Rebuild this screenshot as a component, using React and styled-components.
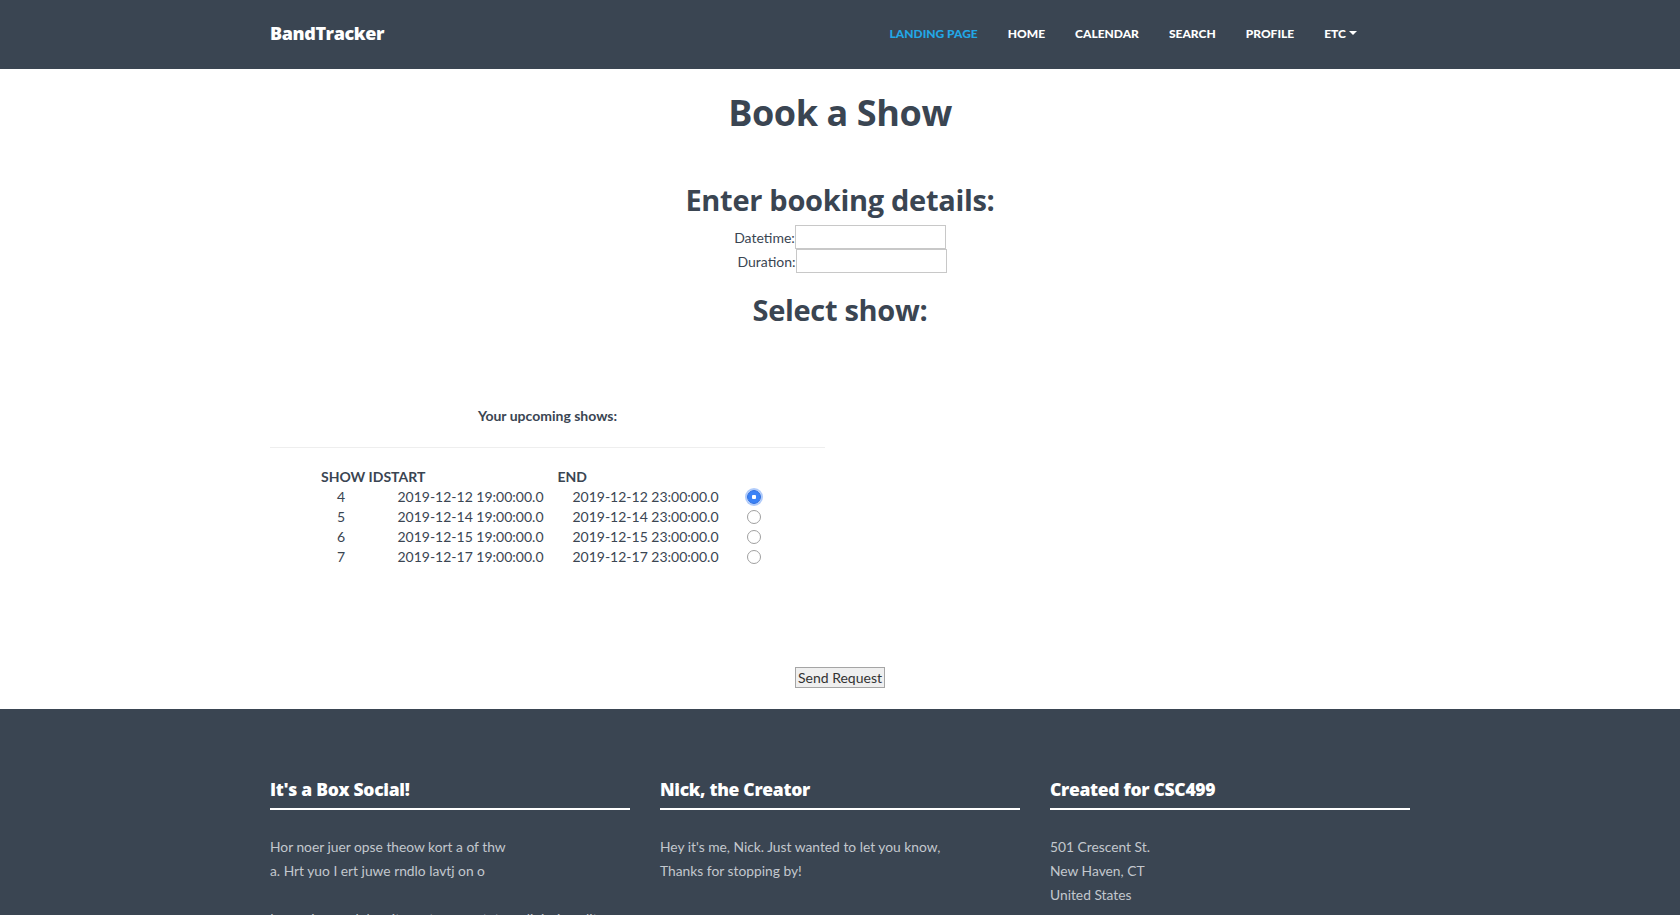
import React from "react";
import styled, { createGlobalStyle } from "styled-components";

const GlobalStyle = createGlobalStyle`
  body {
    margin: 0;
    background: #ffffff;
    font-family: Lato, "Open Sans", sans-serif;
    color: #2c3e50;
  }
  * {
    box-sizing: border-box;
  }
`;

const Navbar = styled.nav`
  height: 69px;
  background: #3a4552;
`;

const NavInner = styled.div`
  width: 1140px;
  height: 100%;
  margin: 0 auto;
  padding-bottom: 3px;
  display: flex;
  align-items: center;
  justify-content: space-between;
`;

const Brand = styled.a`
  font-family: "Open Sans", sans-serif;
  font-weight: 800;
  font-size: 18px;
  letter-spacing: -0.4px;
  color: #ffffff;
  text-decoration: none;
`;

const NavList = styled.ul`
  display: flex;
  gap: 30px;
  margin: 0 53px 0 0;
  padding: 0;
  list-style: none;
`;

const NavLink = styled.li`
  display: flex;
  align-items: center;
  font-family: Lato, sans-serif;
  font-weight: 900;
  font-size: 12px;
  text-transform: uppercase;
  color: ${(p) => (p.$active ? "#22a7e6" : "#ffffff")};
`;

const Caret = styled.span`
  display: inline-block;
  margin-left: 3px;
  border-top: 4px solid #ffffff;
  border-left: 4px solid transparent;
  border-right: 4px solid transparent;
`;

const Main = styled.main`
  width: 1140px;
  margin: 0 auto;
  text-align: center;
  padding-bottom: 21px;
`;

const Title = styled.h1`
  font-family: "Open Sans", sans-serif;
  font-weight: 700;
  font-size: 36px;
  line-height: 40px;
  letter-spacing: -0.4px;
  color: #3a4552;
  margin: 24px 0 0;
`;

const SubTitle = styled.h2`
  font-family: "Open Sans", sans-serif;
  font-weight: 700;
  font-size: 29px;
  line-height: 34px;
  letter-spacing: -0.3px;
  color: #3a4552;
  margin: ${(p) => p.$margin || "0"};
`;

const Form = styled.form`
  display: flex;
  flex-direction: column;
  align-items: center;
`;

const FieldRow = styled.label`
  display: flex;
  align-items: center;
  font-size: 14px;
  color: #3a4552;
  transform: translateX(${(p) => p.$shift || 0}px);
`;

const Input = styled.input`
  width: 151px;
  height: 24px;
  margin: 0;
  border: 1px solid #c8c8c8;
  background: #ffffff;
`;

const ShowsColumn = styled.section`
  align-self: flex-start;
  width: 555px;
  margin-top: 79px;
`;

const ShowsHeading = styled.h5`
  font-size: 14px;
  font-weight: 700;
  line-height: 20px;
  color: #3a4552;
  margin: 0;
`;

const Rule = styled.hr`
  border: 0;
  border-top: 1px solid #eeeeee;
  margin: 21px 0 19px;
`;

const ShowTable = styled.table`
  border-collapse: collapse;
  table-layout: fixed;
  margin-left: 51px;
  text-align: left;
  font-size: 14px;
  line-height: 20px;
  color: #3a4552;
`;

const HeadCell = styled.th`
  padding: 0;
  font-weight: 700;
  text-align: left;
  white-space: nowrap;
`;

const Cell = styled.td`
  padding: 0 0 0 ${(p) => p.$pad || 15}px;
  white-space: nowrap;
`;

const Radio = styled.input.attrs({ type: "radio" })`
  appearance: none;
  display: block;
  width: 14px;
  height: 14px;
  margin: 0;
  border-radius: 50%;
  border: 1px solid #a0a0a0;
  background: #ffffff;

  &:checked {
    border: 1px solid #2f6fe0;
    background: radial-gradient(circle, #ffffff 0 2px, #3b82f6 2.5px);
    box-shadow: 0 0 0 2px rgba(80, 140, 245, 0.45);
  }
`;

const SendButton = styled.button`
  margin-top: 100px;
  padding: 0 2px;
  height: 21px;
  font-family: Lato, sans-serif;
  font-size: 14px;
  line-height: 19px;
  color: #333333;
  background: #efefef;
  border: 1px solid #a5a5a5;
  border-radius: 0;
`;

const Footer = styled.footer`
  background: #3a4552;
  padding: 68px 0 40px;
`;

const FooterGrid = styled.div`
  width: 1140px;
  margin: 0 auto;
  display: grid;
  grid-template-columns: repeat(3, 360px);
  gap: 30px;
`;

const FooterHeading = styled.h3`
  font-family: "Open Sans", sans-serif;
  font-weight: 800;
  font-size: 17.5px;
  line-height: 24px;
  letter-spacing: -0.3px;
  color: #ffffff;
  margin: 0;
  padding-bottom: 7px;
  border-bottom: 2px solid #ffffff;
`;

const FooterText = styled.p`
  font-size: 13.8px;
  line-height: 24px;
  color: #c3c8ce;
  margin: ${(p) => p.$margin || "25px 0 0"};
`;

const shows = [
  { id: 4, start: "2019-12-12 19:00:00.0", end: "2019-12-12 23:00:00.0" },
  { id: 5, start: "2019-12-14 19:00:00.0", end: "2019-12-14 23:00:00.0" },
  { id: 6, start: "2019-12-15 19:00:00.0", end: "2019-12-15 23:00:00.0" },
  { id: 7, start: "2019-12-17 19:00:00.0", end: "2019-12-17 23:00:00.0" },
];

const navItems = ["Landing Page", "Home", "Calendar", "Search", "Profile"];

export default function App() {
  return (
    <>
      <GlobalStyle />
      <Navbar>
        <NavInner>
          <Brand href="#">BandTracker</Brand>
          <NavList>
            {navItems.map((item, i) => (
              <NavLink key={item} $active={i === 0}>
                {item}
              </NavLink>
            ))}
            <NavLink>
              Etc
              <Caret />
            </NavLink>
          </NavList>
        </NavInner>
      </Navbar>

      <Main>
        <Title>Book a Show</Title>
        <Form>
          <SubTitle $margin="50px 0 8px">Enter booking details:</SubTitle>
          <FieldRow>
            Datetime:
            <Input type="text" />
          </FieldRow>
          <FieldRow $shift={2}>
            Duration:
            <Input type="text" />
          </FieldRow>
          <SubTitle $margin="20px 0 0">Select show:</SubTitle>

          <ShowsColumn>
            <ShowsHeading>Your upcoming shows:</ShowsHeading>
            <Rule />
            <ShowTable>
              <colgroup>
                <col style={{ width: 58 }} />
                <col style={{ width: 174 }} />
                <col style={{ width: 173 }} />
                <col style={{ width: 40 }} />
              </colgroup>
              <thead>
                <tr>
                  <HeadCell>SHOW ID</HeadCell>
                  <HeadCell>START</HeadCell>
                  <HeadCell>END</HeadCell>
                  <HeadCell />
                </tr>
              </thead>
              <tbody>
                {shows.map((s, i) => (
                  <tr key={s.id}>
                    <Cell $pad={16}>{s.id}</Cell>
                    <Cell $pad={14}>{s.start}</Cell>
                    <Cell $pad={15}>{s.end}</Cell>
                    <Cell $pad={17}>
                      <Radio name="show" defaultChecked={i === 0} />
                    </Cell>
                  </tr>
                ))}
              </tbody>
            </ShowTable>
          </ShowsColumn>

          <SendButton type="button">Send Request</SendButton>
        </Form>
      </Main>

      <Footer>
        <FooterGrid>
          <div>
            <FooterHeading>It's a Box Social!</FooterHeading>
            <FooterText>
              Hor noer juer opse theow kort a of thw
              <br />
              a. Hrt yuo I ert juwe rndlo lavtj on o
            </FooterText>
            <FooterText $margin="24px 0 0">
              Lorem ipsum dolor sit amet, consectetur adipiscing elit.
            </FooterText>
          </div>
          <div>
            <FooterHeading>Nick, the Creator</FooterHeading>
            <FooterText>
              Hey it's me, Nick. Just wanted to let you know,
              <br />
              Thanks for stopping by!
            </FooterText>
          </div>
          <div>
            <FooterHeading>Created for CSC499</FooterHeading>
            <FooterText>
              501 Crescent St.
              <br />
              New Haven, CT
              <br />
              United States
            </FooterText>
          </div>
        </FooterGrid>
      </Footer>
    </>
  );
}
